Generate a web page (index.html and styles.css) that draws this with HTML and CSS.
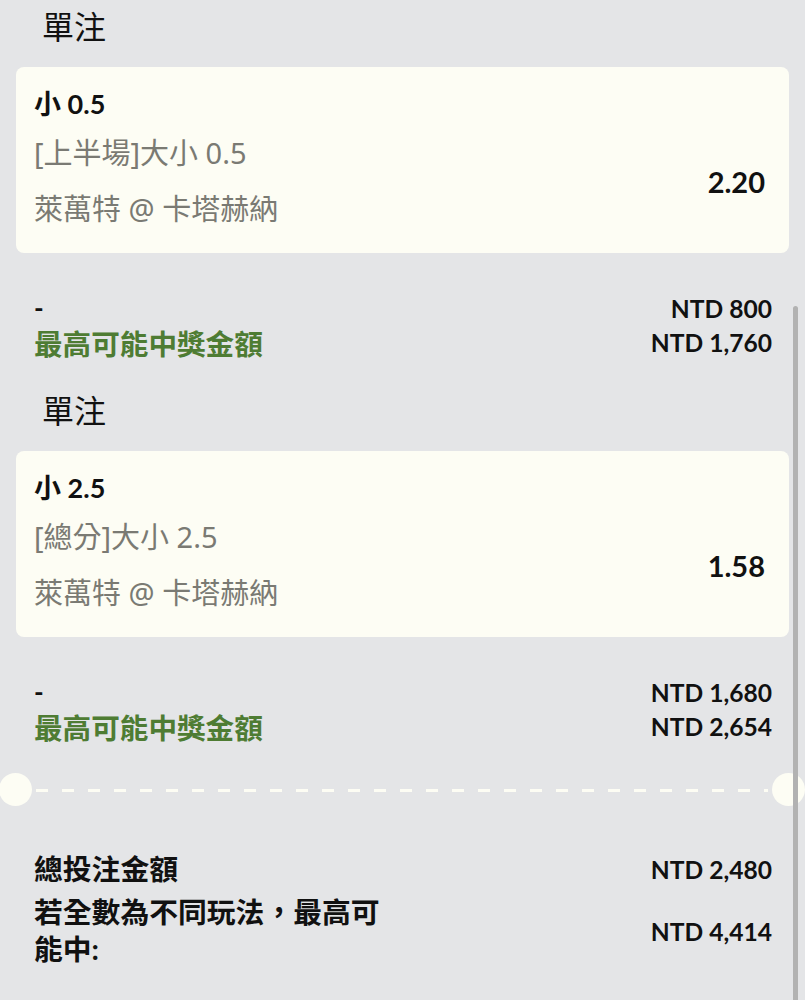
FILE: index.html
```html
<!DOCTYPE html>
<html lang="zh-Hant">
<head>
    <meta charset="UTF-8">
    <meta name="viewport" content="width=device-width, initial-scale=1.0">
    <title>投注單</title>
    <link rel="stylesheet" href="styles.css">
</head>
<body>
    <div class="slip">
        <!-- first bet -->
        <div class="bet">
            <h2 class="bet-type">單注</h2>
            <div class="card">
                <div class="pick">小 0.5</div>
                <div class="card-row">
                    <div class="card-info">
                        <div class="market">[上半場]大小 0.5</div>
                        <div class="match">萊萬特 @ 卡塔赫納</div>
                    </div>
                    <div class="odds">2.20</div>
                </div>
            </div>
            <div class="stake">
                <div class="stake-row">
                    <span class="stake-label">-</span>
                    <span class="amount">NTD 800</span>
                </div>
                <div class="stake-row">
                    <span class="win-label">最高可能中獎金額</span>
                    <span class="amount">NTD 1,760</span>
                </div>
            </div>
        </div>

        <!-- second bet -->
        <div class="bet">
            <h2 class="bet-type">單注</h2>
            <div class="card">
                <div class="pick">小 2.5</div>
                <div class="card-row">
                    <div class="card-info">
                        <div class="market">[總分]大小 2.5</div>
                        <div class="match">萊萬特 @ 卡塔赫納</div>
                    </div>
                    <div class="odds">1.58</div>
                </div>
            </div>
            <div class="stake">
                <div class="stake-row">
                    <span class="stake-label">-</span>
                    <span class="amount">NTD 1,680</span>
                </div>
                <div class="stake-row">
                    <span class="win-label">最高可能中獎金額</span>
                    <span class="amount">NTD 2,654</span>
                </div>
            </div>
        </div>

        <div class="divider">
            <span class="notch"></span>
            <span class="dashes"></span>
            <span class="notch"></span>
        </div>

        <div class="totals">
            <div class="total-row">
                <span class="total-label">總投注金額</span>
                <span class="amount">NTD 2,480</span>
            </div>
            <div class="total-row">
                <span class="total-label">若全數為不同玩法，最高可能中:</span>
                <span class="amount">NTD 4,414</span>
            </div>
        </div>
    </div>

    <div class="scroll-thumb"></div>
</body>
</html>
```

FILE: styles.css
```css
body {
    margin: 0;
    background: #e4e5e7;
    font-family: Lato, "Noto Sans CJK TC", sans-serif;
    color: #111;
}

.slip {
    padding-bottom: 20px;
}

.bet {
    margin-bottom: 25px;
}

.bet-type {
    margin: 0 0 13px;
    padding-left: 42px;
    font-size: 32px;
    font-weight: 400;
    line-height: 54px;
}

.card {
    margin: 0 16px;
    padding: 20px 24px 24px 18px;
    background: #fdfdf4;
    border-radius: 8px;
}

.pick {
    font-size: 27px;
    font-weight: 700;
    line-height: 34px;
}

.card-row {
    display: flex;
    align-items: center;
    justify-content: space-between;
    margin-top: 12px;
}

.market,
.match {
    color: #7a7a73;
    font-family: "Noto Sans", "Noto Sans CJK TC", sans-serif;
    font-size: 29px;
    line-height: 40px;
}

.match {
    margin-top: 16px;
}

.odds {
    font-size: 29px;
    font-weight: 700;
}

.stake {
    margin-top: 38px;
    padding: 0 33px 0 34px;
}

.stake-row {
    display: flex;
    justify-content: space-between;
    align-items: center;
    height: 34px;
}

.stake-label {
    font-size: 26px;
    font-weight: 700;
}

.win-label {
    color: #4e7c33;
    font-size: 28.6px;
    font-weight: 700;
}

.amount {
    font-size: 24.6px;
    font-weight: 700;
}

.divider {
    display: flex;
    align-items: center;
    height: 34px;
    margin-top: 29px;
}

.notch {
    flex: 0 0 33px;
    height: 33px;
    border-radius: 50%;
    background: #fdfdf4;
}

.notch:first-child {
    margin-left: -1px;
}

.dashes {
    flex: 1;
    height: 3px;
    margin: 2px 4px 0;
    background: repeating-linear-gradient(to right, #fdfdf4 0 12px, transparent 12px 26px);
}

.totals {
    margin-top: 45px;
    padding: 0 33px 0 34px;
}

.total-row {
    display: flex;
    justify-content: space-between;
    align-items: center;
    margin-bottom: 6px;
}

.total-label {
    max-width: 355px;
    font-size: 28.8px;
    font-weight: 700;
    line-height: 37px;
}

.scroll-thumb {
    position: absolute;
    top: 306px;
    left: 793px;
    width: 5px;
    height: 700px;
    border-radius: 3px;
    background: #b2b2b2;
}
```
